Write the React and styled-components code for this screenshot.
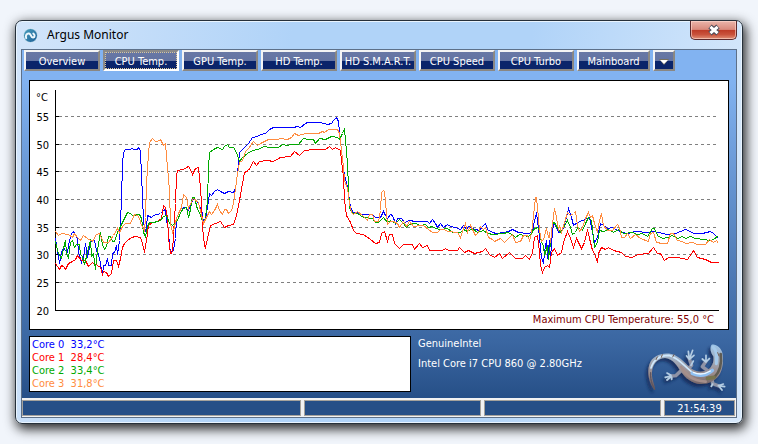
import React from "react";
import styled, { createGlobalStyle } from "styled-components";

const GlobalStyle = createGlobalStyle`
	* {
		box-sizing: border-box;
	}

	body {
		margin: 0;
		background: #f1f5fb;
		font-family: "DejaVu Sans Condensed", "DejaVu Sans", sans-serif;
		font-size: 11px;
		line-height: 13px;
	}
`;

const Desktop = styled.div`
	padding: 20px 15px;
`;

const Window = styled.main`
	padding: 0 5px 5px;
	border: 1px solid #26303a;
	border-radius: 7px;
	background: linear-gradient(100deg, #d3e5fa 0, #b0d3f8 35%, #b0d3f8 65%, #d6e8fb 95%);
	box-shadow: inset 0 0 0 1px #e9f4fe, 2px 4px 12px 1px rgba(0, 0, 0, 0.85);
`;

const TitleBar = styled.header`
	display: flex;
	align-items: center;
	gap: 9px;
	height: 28px;
	padding-left: 2px;
`;

const Title = styled.h1`
	flex: 1;
	margin: 0;
	font: 12px/16px "Noto Sans", "Open Sans", sans-serif;
	color: #000;
`;

const CloseButton = styled.button`
	display: flex;
	align-items: center;
	justify-content: center;
	align-self: flex-start;
	width: 47px;
	height: 19px;
	padding: 0;
	border: 1px solid #5b2a2d;
	border-top: 0;
	border-radius: 0 0 5px 5px;
	background: linear-gradient(#eab5ab 0, #d98a7c 47%, #bd3a26 50%, #c9523c 75%, #e08f76 100%);
	box-shadow: inset 0 0 0 1px rgba(255, 220, 210, 0.6);
`;

const Client = styled.div`
	border: 1px solid #5d7089;
	background: linear-gradient(#82b3f1 0, #82b3f1 8%, #3a66a1 80%, #264f87 95%);
`;

const Tabs = styled.nav`
	display: flex;
	gap: 3px;
	padding: 0 2px;
`;

const Tab = styled.button`
	width: ${({ $width }) => $width || 76}px;
	height: 21px;
	padding: 2px 0 0;
	border: 2px solid;
	border-color: ${({ $active }) =>
		$active ? "#8a8a8a #fff #fff #8a8a8a" : "#f4f4f4 #8a8782 #8a8782 #f4f4f4"};
	outline: ${({ $active }) => ($active ? "1px dotted #d9c79a" : "none")};
	outline-offset: -3px;
	background: linear-gradient(#6878a5 0, #6373a2 52%, #0a246a 53%, #0a246a 100%);
	color: #fff;
	font: inherit;
	white-space: nowrap;
`;

const Content = styled.div`
	display: flex;
	flex-direction: column;
	gap: 6px;
	padding: 9px 7px 6px;
`;

const Panel = styled.section`
	border: 1px solid #000;
	background: #fff;
`;

const Chart = styled.svg`
	display: block;
	width: 100%;
	height: auto;
	font-size: 11px;
`;

const Summary = styled.div`
	display: flex;
	gap: 7px;
`;

const CoreList = styled.ul`
	flex: 0 1 382px;
	height: 56px;
	margin: 0;
	padding: 1px 2px;
	border: 1px solid #000;
	background: #fff;
	list-style: none;
`;

const Core = styled.li`
	color: ${({ $color }) => $color};
	white-space: pre;
`;

const CpuInfo = styled.div`
	display: flex;
	flex: 1;
	flex-direction: column;
	gap: 7px;
	padding-top: 1px;
	color: #fff;
	white-space: nowrap;
`;

const Gecko = styled.svg`
	flex: none;
	width: 90px;
	height: 65px;
	margin-bottom: -9px;
`;

const StatusBar = styled.footer`
	display: grid;
	grid-template-columns: 11fr 7fr 7fr 71px;
	gap: 3px;
	padding: 2px 1px 1px 0;
	background: #f2f2f2;
`;

const StatusCell = styled.div`
	height: 16px;
	border: 1px solid #a5a29c;
	background: #264f87;
	color: #fff;
	line-height: 15px;
	text-align: center;
`;

const TABS = [
	"Overview",
	"CPU Temp.",
	"GPU Temp.",
	"HD Temp.",
	"HD S.M.A.R.T.",
	"CPU Speed",
	"CPU Turbo",
];

const SCALE = [
	{ temp: 55, y: 116 },
	{ temp: 50, y: 144 },
	{ temp: 45, y: 171 },
	{ temp: 40, y: 199 },
	{ temp: 35, y: 227 },
	{ temp: 30, y: 254 },
	{ temp: 25, y: 282 },
	{ temp: 20, y: 310 },
];

const CORES = [
	{
		name: "Core 0",
		value: "33,2",
		color: "#0000ff",
		points:
			"55,238 57,250 59,263 61,252 63,247 65,250 67,252 69,240 71,233 73,231 75,235 77,238 78,252 81,262 83,257 85,243 87,257 89,247 91,240 94,240 96,250 98,254 100,263 102,275 103,265 105,265 107,258 108,265 111,265 112,253 114,252 116,245 117,254 119,240 121,200 122,163 123,152 125,149 130,149 131,148 134,149 137,149 138,147 140,150 141,177 142,193 143,223 145,230 146,227 147,215 151,217 153,215 160,213 163,210 165,209 166,220 168,230 169,247 171,252 173,250 175,238 176,218 178,213 180,208 185,207 188,210 191,202 193,198 198,203 202,213 203,223 205,218 207,207 209,193 211,195 214,191 217,189 220,191 224,193 228,191 233,192 235,188 237,173 238,163 239,152 243,148 248,143 252,137 257,136 260,134 265,133 269,129 273,127 293,127 297,126 300,127 305,123 307,122 320,122 327,124 331,123 333,120 336,117 338,121 339,132 341,150 343,167 344,175 346,182 348,193 350,207 353,212 357,212 360,214 372,214 375,217 380,217 383,211 385,215 387,218 390,214 392,215 395,223 397,218 401,218 404,222 409,220 415,221 427,221 429,223 432,219 435,223 437,227 440,223 443,227 447,224 450,226 455,227 460,229 463,225 466,229 468,226 475,229 479,230 482,226 485,223 487,229 492,232 496,233 503,232 508,231 512,229 518,232 527,233 532,232 533,225 536,212 537,220 539,237 541,257 543,263 544,252 546,240 547,258 549,240 550,260 551,242 553,223 555,225 558,232 562,230 564,223 566,217 568,208 571,217 573,225 577,222 582,220 587,218 589,217 591,227 594,242 597,237 600,223 603,225 607,228 612,227 617,230 622,232 627,233 635,231 648,232 653,231 658,232 667,234 675,233 680,231 685,229 690,231 693,233 702,233 710,231 713,233 718,238",
	},
	{
		name: "Core 1",
		value: "28,4",
		color: "#ff0000",
		points:
			"55,263 57,266 59,269 61,265 63,266 65,269 68,263 72,261 75,259 77,255 81,260 85,260 88,266 92,262 97,265 100,267 102,274 103,271 106,272 108,276 111,273 113,260 116,260 118,266 120,258 122,247 124,243 127,240 131,237 135,236 140,237 142,243 144,252 146,240 148,225 152,222 157,221 161,218 163,205 165,207 167,217 168,237 170,253 172,252 173,233 175,203 176,175 177,170 183,169 188,166 190,169 192,174 195,168 198,167 200,188 201,203 202,227 204,245 205,247 207,238 210,225 215,223 220,221 224,227 228,225 233,224 236,215 239,200 242,183 244,172 248,170 253,161 256,165 259,161 267,160 273,161 280,157 290,156 294,151 299,155 304,150 313,149 325,149 329,146 332,149 335,147 340,150 341,160 343,177 344,200 346,215 350,222 353,230 356,233 363,234 370,239 375,243 379,242 381,233 384,231 387,241 389,234 392,234 394,243 399,248 403,244 412,244 414,249 419,243 422,247 427,245 429,250 442,250 445,248 448,250 457,250 459,247 464,252 468,250 474,253 482,251 485,248 489,254 494,257 499,253 502,258 509,252 515,258 522,258 525,255 529,259 532,252 534,237 537,235 539,252 540,265 542,272 544,267 547,265 549,267 551,252 554,248 557,255 561,252 563,242 567,231 570,238 573,247 576,238 581,248 584,242 587,229 589,238 592,250 594,253 597,262 598,253 601,247 605,249 608,247 613,250 621,252 625,256 632,257 637,254 648,253 653,247 657,253 660,253 664,260 668,257 677,257 687,259 693,250 697,257 705,259 711,262 718,262",
	},
	{
		name: "Core 2",
		value: "33,4",
		color: "#00aa00",
		points:
			"55,241 57,250 59,255 61,258 63,248 65,240 66,253 68,258 70,242 72,240 74,247 76,244 79,244 80,254 82,256 84,264 86,256 88,248 90,239 91,256 93,253 95,269 96,258 98,243 100,232 102,244 104,249 106,246 108,236 110,236 112,241 114,241 117,232 119,228 122,222 124,218 127,212 130,213 133,216 136,214 139,214 141,218 143,232 145,236 147,226 149,222 153,222 157,221 160,220 163,216 166,215 169,223 172,225 175,222 177,220 180,212 183,208 186,207 188,217 190,209 192,197 194,197 197,209 199,212 203,223 205,217 207,200 208,167 209,152 213,149 217,147 222,149 224,146 227,144 229,147 233,147 235,150 237,155 239,161 242,157 247,153 252,150 258,149 263,146 270,147 278,147 282,144 287,145 290,144 298,144 303,138 308,139 313,139 315,143 319,138 325,139 331,136 337,137 339,139 342,133 344,128 345,140 347,163 348,187 349,207 352,213 357,213 363,217 372,218 375,222 378,222 383,217 387,222 390,220 395,223 399,219 403,223 406,227 409,224 415,223 420,225 425,224 428,227 432,226 435,228 440,229 447,228 452,232 460,232 463,229 467,231 472,228 477,232 483,230 487,233 493,234 503,233 507,232 512,234 515,237 519,234 528,236 531,233 533,229 537,227 539,230 541,242 543,245 544,255 547,245 548,259 550,243 552,223 554,222 557,228 560,232 563,227 567,220 570,227 572,234 575,232 577,227 582,230 585,223 588,217 591,220 593,238 594,247 597,242 599,230 603,231 608,229 613,232 618,229 623,233 632,232 637,234 642,233 647,236 652,228 654,228 657,235 662,238 667,237 672,235 677,238 682,236 685,238 690,236 695,238 703,239 710,240 713,239 718,235",
	},
	{
		name: "Core 3",
		value: "31,8",
		color: "#ff8c40",
		points:
			"55,231 58,235 61,233 68,234 72,237 74,233 77,237 80,240 83,235 87,238 92,241 96,234 99,233 103,242 108,242 113,235 117,228 119,232 122,226 125,223 130,223 134,214 137,215 139,218 141,225 143,228 144,230 145,217 146,183 148,153 149,142 152,138 155,141 157,141 160,139 163,145 165,143 167,167 169,190 170,223 172,232 173,230 176,218 178,213 181,207 183,194 186,197 188,208 191,201 193,198 198,202 201,215 203,223 206,217 209,211 211,214 214,210 217,204 219,210 222,214 224,209 226,209 228,213 231,210 233,203 235,188 237,173 239,162 242,160 245,151 248,148 253,141 257,145 262,142 268,139 277,139 280,138 287,139 291,137 294,133 298,135 305,133 318,133 322,131 324,132 328,129 337,129 339,133 341,150 343,167 344,180 347,188 349,203 351,212 353,214 357,211 362,215 367,220 369,214 372,214 374,221 378,221 380,210 381,192 383,190 384,191 386,213 387,224 390,221 393,221 397,223 399,227 403,221 406,226 409,221 413,226 420,225 423,225 428,229 432,232 437,232 440,229 443,229 448,231 457,232 460,237 463,228 465,223 467,232 470,225 475,235 478,232 480,226 483,229 485,227 488,237 492,239 494,241 500,238 504,242 508,238 512,234 515,242 520,241 523,235 527,235 529,240 531,233 533,215 535,197 536,197 537,207 539,230 541,241 543,239 546,228 548,237 549,232 550,242 552,223 554,208 556,217 558,230 559,225 561,232 564,222 567,212 570,215 573,213 575,211 577,225 579,231 582,227 585,218 588,212 590,217 592,215 594,223 597,232 599,220 601,213 603,225 607,230 612,230 617,224 619,227 621,237 624,237 627,233 630,238 635,234 640,238 648,241 650,233 653,232 656,242 662,243 667,243 670,233 673,233 677,240 682,241 685,243 692,242 697,244 705,244 709,239 713,242 716,240 718,243",
	},
];

const BODY =
	"M46 162C30 140 24 110 31 86C40 58 70 49 97 54C125 61 140 85 160 100C175 110 195 110 210 99C222 89 226 72 223 60C215 50 212 34 218 26C230 22 247 36 250 50C254 75 252 100 240 118C225 138 200 148 175 143C150 137 135 120 122 101C110 80 95 67 78 66C55 67 41 84 39 108C37 130 47 145 49 161Z";

const AppIcon = () => (
	<svg width="15" height="15" viewBox="0 0 15 15" aria-hidden="true">
		<defs>
			<linearGradient id="badge" x1="0" y1="0" x2="1" y2="1">
				<stop offset="0" stopColor="#4ba0bd" />
				<stop offset="1" stopColor="#1b5d96" />
			</linearGradient>
		</defs>
		<circle cx="7.5" cy="7.5" r="7" fill="url(#badge)" stroke="#e5f2fb" strokeWidth="0.8" />
		<path
			d="M3.2 10.2C2 7.4 4 4.9 6 5.5C8.6 6.4 7.8 10 10.2 9.6C12 9.2 12 6.4 10.3 5.6"
			fill="none"
			stroke="#eef8fc"
			strokeWidth="2"
			strokeLinecap="round"
		/>
	</svg>
);

const GeckoLogo = () => (
	<Gecko viewBox="0 0 270 195" aria-hidden="true">
		<defs>
			<linearGradient id="skin" x1="0" y1="0" x2="0" y2="1">
				<stop offset="0" stopColor="#9cc4e8" />
				<stop offset="0.35" stopColor="#a3adbd" />
				<stop offset="0.65" stopColor="#9a8a8a" />
				<stop offset="1" stopColor="#5d5055" />
			</linearGradient>
			<filter id="shade" x="-20%" y="-20%" width="140%" height="140%">
				<feDropShadow dx="-7" dy="9" stdDeviation="5" floodColor="#0c2450" floodOpacity="0.75" />
			</filter>
		</defs>
		<g filter="url(#shade)" strokeLinecap="round" strokeLinejoin="round">
			<g fill="none" stroke="#8f93a6" strokeWidth="10">
				<path d="M146 100L158 88L151 68" />
				<path d="M126 104L110 119L94 120" />
				<path d="M205 103L190 92L201 76" />
				<path d="M219 124L221 143L240 150" />
			</g>
			<g fill="none" stroke="#b4cde4" strokeWidth="5">
				<path d="M151 70L143 60M151 70L148 46M151 70L161 43M151 70L165 58M156 88L163 75" />
				<path d="M96 118L84 111M96 120L79 124M96 122L84 132M98 123L98 130" />
				<path d="M201 78L190 69M201 78L201 58M201 78L211 68" />
				<path d="M238 149L253 144M238 149L257 152M240 151L249 162M221 144L217 151" />
			</g>
			<path d={BODY} fill="url(#skin)" />
			<g fill="none">
				<path
					d="M36 96C44 70 65 58 90 58C118 64 138 93 160 109"
					stroke="#cfe8fc"
					strokeWidth="5"
				/>
				<path d="M160 112C185 123 205 116 220 103" stroke="#8fc0f2" strokeWidth="11" />
				<path d="M163 109C182 118 201 113 214 105" stroke="#eef8ff" strokeWidth="4" />
				<path d="M223 34C236 45 233 65 232 83" stroke="#a6caea" strokeWidth="9" />
				<path d="M245 54C249 83 245 105 226 124" stroke="#5f5c52" strokeWidth="8" />
				<path d="M205 127L225 124" stroke="#77744f" strokeWidth="11" />
				<path d="M35 110C34 130 38 143 46 158" stroke="#5f5660" strokeWidth="4" strokeDasharray="6 3" />
				<path d="M126 93C142 114 151 131 200 137" stroke="#a58f8b" strokeWidth="8" />
				<path d="M51 71L55 63M67 64L70 56M101 63L105 56M236 50L240 60" stroke="#765e50" strokeWidth="3" />
			</g>
		</g>
	</Gecko>
);

const TemperatureChart = () => (
	<Chart viewBox="30 81 698 248" role="img" aria-label="CPU temperature">
		<text x="36" y="101">
			°C
		</text>
		{SCALE.map(({ temp, y }) => (
			<g key={temp}>
				<text x="49" y={y + 5} textAnchor="end">
					{temp}
				</text>
				{temp > 20 && (
					<>
						<path
							d={`M59 ${y + 0.5}H718`}
							stroke="#808080"
							strokeDasharray="3 3"
							shapeRendering="crispEdges"
						/>
						<path d={`M56 ${y + 0.5}h3`} stroke="#000" shapeRendering="crispEdges" />
					</>
				)}
			</g>
		))}
		<path d="M55.5 90V310.5H719" fill="none" stroke="#000" shapeRendering="crispEdges" />
		<g fill="none" shapeRendering="crispEdges" transform="translate(0.5 0.5)">
			{CORES.map(({ name, color, points }) => (
				<polyline key={name} points={points} stroke={color} />
			))}
		</g>
		<text x="714" y="323" textAnchor="end" fill="#800000">
			Maximum CPU Temperature: 55,0 °C
		</text>
	</Chart>
);

const App = () => (
	<>
		<GlobalStyle />
		<Desktop>
			<Window>
				<TitleBar>
					<AppIcon />
					<Title>Argus Monitor</Title>
					<CloseButton type="button" aria-label="Close">
						<svg width="14" height="12" viewBox="0 0 14 12">
							<path d="M3 2.5L11 9.5M11 2.5L3 9.5" stroke="#4b4b58" strokeWidth="5" />
							<path d="M3.4 2.8L10.6 9.2M10.6 2.8L3.4 9.2" stroke="#fff" strokeWidth="3" />
						</svg>
					</CloseButton>
				</TitleBar>
				<Client>
					<Tabs>
						{TABS.map((label) => (
							<Tab key={label} type="button" $active={label === "CPU Temp."}>
								{label}
							</Tab>
						))}
						<Tab type="button" $width={73}>
							Mainboard
						</Tab>
						<Tab type="button" $width={22} aria-label="More">
							<svg width="10" height="6" viewBox="0 0 10 6">
								<path d="M0 0H10L5 6Z" fill="#77705f" />
								<path d="M1 1H9L5 5Z" fill="#fff" />
							</svg>
						</Tab>
					</Tabs>
					<Content>
						<Panel>
							<TemperatureChart />
						</Panel>
						<Summary>
							<CoreList>
								{CORES.map(({ name, value, color }) => (
									<Core key={name} $color={color}>{`${name}  ${value}°C`}</Core>
								))}
							</CoreList>
							<CpuInfo>
								<span>GenuineIntel</span>
								<span>Intel Core i7 CPU 860 @ 2.80GHz</span>
							</CpuInfo>
							<GeckoLogo />
						</Summary>
					</Content>
					<StatusBar>
						<StatusCell />
						<StatusCell />
						<StatusCell />
						<StatusCell>21:54:39</StatusCell>
					</StatusBar>
				</Client>
			</Window>
		</Desktop>
	</>
);

export default App;
